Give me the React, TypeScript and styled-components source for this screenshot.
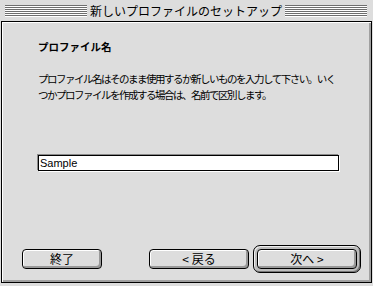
import React from 'react';
import styled, { createGlobalStyle } from 'styled-components';

const GlobalStyle = createGlobalStyle`
  html, body {
    margin: 0;
    padding: 0;
    background: #dddddd;
  }
`;

const jp = `"Noto Sans CJK JP", "Liberation Sans", sans-serif`;

const Window = styled.div`
  width: 373px;
  height: 286px;
  display: flex;
  flex-direction: column;
  background: #dddddd;
  font-family: ${jp};
  color: #000;
  overflow: hidden;
`;

const TitleBar = styled.div`
  height: 21px;
  display: flex;
  align-items: center;
  padding: 0 6px 0 5px;
  gap: 3px;
  box-sizing: border-box;
`;

const Stripes = styled.div`
  flex: 1;
  height: 12px;
  margin-top: 1px;
  background: repeating-linear-gradient(to bottom, #6e6e6e 0 1px, #ffffff 1px 2px);
`;

const Title = styled.div`
  font-size: 12px;
  line-height: 14px;
  white-space: nowrap;
`;

const Frame = styled.div`
  flex: 1;
  margin: 0 1px 3px 1px;
  border: 1px solid #000;
  display: flex;
  flex-direction: column;
  box-shadow: inset 1px 1px 0 #ffffff, inset -2px -2px 0 #a0a0a0;
`;

const Body = styled.div`
  flex: 1;
  padding: 18px 30px 0 36px;
  display: flex;
  flex-direction: column;
`;

const Heading = styled.div`
  font-size: 10.5px;
  line-height: 14px;
  font-weight: bold;
`;

const Paragraph = styled.p`
  margin: 17px 0 0;
  font-size: 10.5px;
  line-height: 16px;
  letter-spacing: -1.5px;
  white-space: nowrap;
`;

const Field = styled.div`
  margin-top: 52px;
  width: 298px;
  height: 14px;
  background: #fff;
  border: 1px solid #000;
  box-shadow: -1px -1px 0 #8a8a8a, 1px 1px 0 #ffffff;
  font-family: "Liberation Sans", Arial, sans-serif;
  font-size: 11px;
  line-height: 14px;
  padding-left: 1px;
`;

const ButtonRow = styled.div`
  display: flex;
  align-items: center;
  padding: 0 10px 9px 20px;
`;

const Spacer = styled.div`
  flex: 1;
`;

const Button = styled.div<{ $w: number }>`
  width: ${p => p.$w}px;
  height: 20px;
  box-sizing: border-box;
  border: 1px solid #000;
  border-radius: 4px;
  background: #dddddd;
  box-shadow: inset 1px 1px 0 #ffffff, inset -2px -2px 0 #999999;
  display: flex;
  align-items: center;
  justify-content: center;
  font-size: 12px;
  line-height: 14px;
  white-space: pre;
`;

const DefaultRing = styled.div`
  margin-left: 4px;
  padding: 3px;
  border: 1px solid #000;
  border-radius: 7px;
  background: #bdbdbd;
  box-shadow: inset 1px 1px 0 #eeeeee, inset -1px -1px 0 #777777;
  display: flex;
`;

const App: React.FC = () => (
  <>
    <GlobalStyle />
    <Window>
      <TitleBar>
        <Stripes />
        <Title>新しいプロファイルのセットアップ</Title>
        <Stripes />
      </TitleBar>
      <Frame>
        <Body>
          <Heading>プロファイル名</Heading>
          <Paragraph>
            プロファイル名はそのまま使用するか新しいものを入力して下さい。いく
            <br />
            つかプロファイルを作成する場合は、名前で区別します。
          </Paragraph>
          <Field>Sample</Field>
        </Body>
        <ButtonRow>
          <Button $w={80}>終了</Button>
          <Spacer />
          <Button $w={100}>{'< 戻る'}</Button>
          <DefaultRing>
            <Button $w={100}>{'次へ >'}</Button>
          </DefaultRing>
        </ButtonRow>
      </Frame>
    </Window>
  </>
);

export default App;
